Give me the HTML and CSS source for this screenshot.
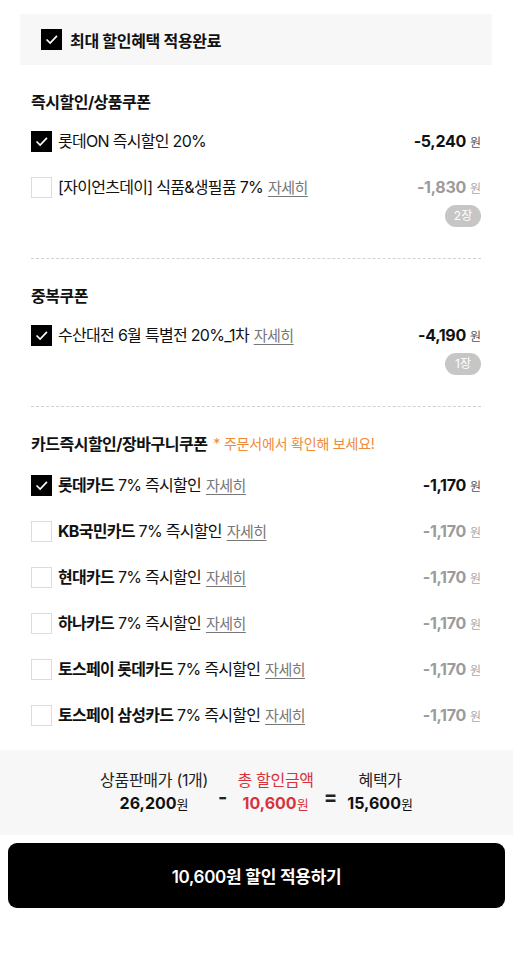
FILE: index.html
```html
<!DOCTYPE html>
<html lang="ko">
<head>
<meta charset="utf-8">
<title>할인 적용</title>
<link rel="stylesheet" href="styles.css">
</head>
<body>
<div class="page">
  <div class="content">
    <div class="best">
      <span class="cb on"><svg viewBox="0 0 21 21"><path d="M5 10.5l4 4 7.5-8" fill="none" stroke="#fff" stroke-width="1.8"/></svg></span>
      <span class="best-text">최대 할인혜택 적용완료</span>
    </div>

    <section class="sec">
      <h2 class="sec-title">즉시할인/상품쿠폰</h2>
      <div class="row">
        <div class="left"><span class="cb on"><svg viewBox="0 0 21 21"><path d="M5 10.5l4 4 7.5-8" fill="none" stroke="#fff" stroke-width="1.8"/></svg></span><span class="label">롯데ON 즉시할인 20%</span></div>
        <div class="right"><div class="price"><b>-5,240</b><span class="won">원</span></div></div>
      </div>
      <div class="row">
        <div class="left"><span class="cb"></span><span class="label">[자이언츠데이] 식품&amp;생필품 7% <a class="more">자세히</a></span></div>
        <div class="right"><div class="price off"><b>-1,830</b><span class="won">원</span></div><span class="badge">2장</span></div>
      </div>
    </section>

    <section class="sec">
      <h2 class="sec-title">중복쿠폰</h2>
      <div class="row">
        <div class="left"><span class="cb on"><svg viewBox="0 0 21 21"><path d="M5 10.5l4 4 7.5-8" fill="none" stroke="#fff" stroke-width="1.8"/></svg></span><span class="label">수산대전 6월 특별전 20%_1차 <a class="more">자세히</a></span></div>
        <div class="right"><div class="price"><b>-4,190</b><span class="won">원</span></div><span class="badge">1장</span></div>
      </div>
    </section>

    <section class="sec last">
      <h2 class="sec-title">카드즉시할인/장바구니쿠폰 <span class="note">* 주문서에서 확인해 보세요!</span></h2>
      <div class="row">
        <div class="left"><span class="cb on"><svg viewBox="0 0 21 21"><path d="M5 10.5l4 4 7.5-8" fill="none" stroke="#fff" stroke-width="1.8"/></svg></span><span class="label"><strong>롯데카드</strong> 7% 즉시할인 <a class="more">자세히</a></span></div>
        <div class="right"><div class="price"><b>-1,170</b><span class="won">원</span></div></div>
      </div>
      <div class="row">
        <div class="left"><span class="cb"></span><span class="label"><strong>KB국민카드</strong> 7% 즉시할인 <a class="more">자세히</a></span></div>
        <div class="right"><div class="price off"><b>-1,170</b><span class="won">원</span></div></div>
      </div>
      <div class="row">
        <div class="left"><span class="cb"></span><span class="label"><strong>현대카드</strong> 7% 즉시할인 <a class="more">자세히</a></span></div>
        <div class="right"><div class="price off"><b>-1,170</b><span class="won">원</span></div></div>
      </div>
      <div class="row">
        <div class="left"><span class="cb"></span><span class="label"><strong>하나카드</strong> 7% 즉시할인 <a class="more">자세히</a></span></div>
        <div class="right"><div class="price off"><b>-1,170</b><span class="won">원</span></div></div>
      </div>
      <div class="row">
        <div class="left"><span class="cb"></span><span class="label"><strong>토스페이 롯데카드</strong> 7% 즉시할인 <a class="more">자세히</a></span></div>
        <div class="right"><div class="price off"><b>-1,170</b><span class="won">원</span></div></div>
      </div>
      <div class="row">
        <div class="left"><span class="cb"></span><span class="label"><strong>토스페이 삼성카드</strong> 7% 즉시할인 <a class="more">자세히</a></span></div>
        <div class="right"><div class="price off"><b>-1,170</b><span class="won">원</span></div></div>
      </div>
      <div class="row">
        <div class="left"><span class="cb"></span></div>
      </div>
    </section>
  </div>

  <div class="summary">
    <div class="col">
      <div class="s-label">상품판매가 (1개)</div>
      <div class="s-val">26,200<span class="s-won">원</span></div>
    </div>
    <div class="op">-</div>
    <div class="col red">
      <div class="s-label">총 할인금액</div>
      <div class="s-val">10,600<span class="s-won">원</span></div>
    </div>
    <div class="op">=</div>
    <div class="col">
      <div class="s-label">혜택가</div>
      <div class="s-val">15,600<span class="s-won">원</span></div>
    </div>
  </div>

  <div class="btn-wrap">
    <button class="apply">10,600원 할인 적용하기</button>
  </div>
</div>
</body>
</html>
```

FILE: styles.css
```css
* { box-sizing: border-box; }
html, body { margin: 0; padding: 0; background: #fff; }
body {
  font-family: Inter, "Noto Sans CJK KR", sans-serif;
  color: #111;
}
.page {
  width: 513px;
  height: 960px;
  display: flex;
  flex-direction: column;
}
.content {
  flex: 1;
  overflow: hidden;
}
.best {
  margin: 14px 21px 0 20px;
  height: 51px;
  background: #f7f7f7;
  display: flex;
  align-items: center;
  padding-left: 21px;
  gap: 8px;
}
.best-text {
  font-size: 16px;
  font-weight: 700;
  letter-spacing: -0.3px;
}
.cb {
  width: 21px;
  height: 21px;
  flex: none;
  border: 1px solid #dcdcdc;
  background: #fff;
  display: inline-block;
}
.cb.on {
  background: #000;
  border-color: #000;
}
.cb svg { display: block; width: 19px; height: 19px; }
.sec {
  margin: 0 32px 0 31px;
  padding: 25px 0 20px;
  border-bottom: 1px dashed #d2d2d2;
}
.sec.last { border-bottom: none; }
.sec-title {
  margin: 0 0 4px;
  font-size: 16px;
  line-height: 24px;
  font-weight: 700;
  letter-spacing: -0.5px;
  display: flex;
  align-items: center;
  gap: 6px;
}
.sec.last .sec-title { margin-bottom: 6px; }
.note {
  font-size: 14px;
  font-weight: 400;
  color: #ee8a3c;
  letter-spacing: -0.2px;
}
.row {
  display: flex;
  justify-content: space-between;
  align-items: flex-start;
  padding: 11px 0;
}
.left {
  display: flex;
  align-items: center;
  gap: 6px;
  height: 24px;
}
.label {
  font-size: 16px;
  line-height: 24px;
  letter-spacing: -0.7px;
  white-space: nowrap;
}
.label strong { font-weight: 700; }
.more {
  color: #777;
  text-decoration: underline;
  text-underline-offset: 3px;
  font-size: 15px;
  letter-spacing: -0.5px;
  margin-left: 1px;
}
.right {
  display: flex;
  flex-direction: column;
  align-items: flex-end;
  gap: 6px;
}
.price {
  height: 24px;
  line-height: 24px;
  display: flex;
  align-items: baseline;
  gap: 4px;
}
.price b {
  font-size: 16px;
  font-weight: 700;
  letter-spacing: -0.3px;
  color: #111;
}
.won {
  font-size: 12px;
  color: #555;
}
.price.off b { color: #9b9b9b; }
.price.off .won { color: #aaa; }
.badge {
  width: 36px;
  height: 22px;
  border-radius: 11px;
  background: #c6c6c6;
  color: #fff;
  font-size: 12px;
  line-height: 22px;
  text-align: center;
}
.summary {
  height: 85px;
  background: #f7f7f7;
  display: flex;
  justify-content: center;
  align-items: center;
  gap: 10px;
  padding-bottom: 2px;
}
.col {
  display: flex;
  flex-direction: column;
  align-items: center;
  gap: 1px;
}
.s-label {
  font-size: 16px;
  line-height: 22px;
  color: #222;
  letter-spacing: -0.3px;
}
.s-val {
  font-size: 16px;
  line-height: 22px;
  font-weight: 700;
  color: #111;
}
.s-won {
  font-size: 13px;
  font-weight: 400;
}
.red .s-label, .red .s-val { color: #d8333c; }
.op {
  font-size: 20px;
  font-weight: 700;
  color: #222;
  padding-top: 10px;
}
.btn-wrap {
  padding: 8px 8px 52px;
}
.apply {
  display: block;
  width: 100%;
  height: 65px;
  border: none;
  border-radius: 9px;
  background: #000;
  color: #fff;
  font-family: Inter, "Noto Sans CJK KR", sans-serif;
  font-size: 17px;
  font-weight: 600;
  letter-spacing: -0.3px;
}
```
